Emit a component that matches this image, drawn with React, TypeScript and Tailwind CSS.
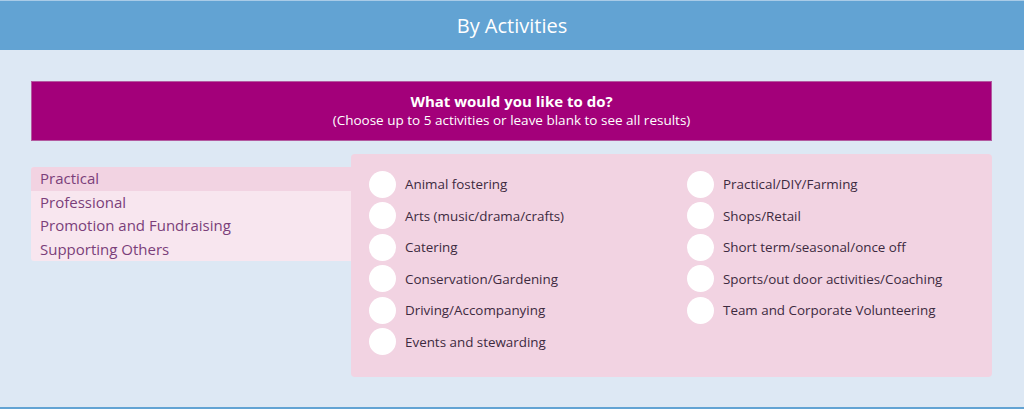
import React from "react";

const categories = [
  "Practical",
  "Professional",
  "Promotion and Fundraising",
  "Supporting Others"
];

const leftActivities = [
  "Animal fostering",
  "Arts (music/drama/crafts)",
  "Catering",
  "Conservation/Gardening",
  "Driving/Accompanying",
  "Events and stewarding"
];

const rightActivities = [
  "Practical/DIY/Farming",
  "Shops/Retail",
  "Short term/seasonal/once off",
  "Sports/out door activities/Coaching",
  "Team and Corporate Volunteering"
];

function ActivityColumn({ items }: { items: string[] }) {
  return (
    <div className="flex flex-col gap-[5px]">
      {items.map((item) => (
        <label key={item} className="flex h-[26.5px] cursor-pointer items-center gap-[9px]">
          <span className="h-[27px] w-[27px] shrink-0 rounded-full bg-white" />
          <span className="text-[13.4px] text-[#3d2a3f]">{item}</span>
        </label>
      ))}
    </div>
  );
}

export default function App() {
  return (
    <div className="flex h-[409px] w-full flex-col border-b-2 border-[#62a3d3] bg-[#dde8f4] font-['Open_Sans',sans-serif]">
      <div className="flex h-[50px] items-center justify-center border-t border-[#a9cbe7] bg-[#62a3d3]">
        <h1 className="text-[20px] text-white">By Activities</h1>
      </div>

      <div className="ml-[31px] mr-[32px] mt-[31px]">
        <div className="flex h-[60px] flex-col items-center justify-center border border-[#b35aa0] bg-[#a3007a] pb-[3px] text-white">
          <p className="text-[15px] font-bold leading-[20px]">What would you like to do?</p>
          <p className="text-[13.5px] leading-[18px]">
            (Choose up to 5 activities or leave blank to see all results)
          </p>
        </div>

        <div className="mt-[13px] flex items-start">
          <ul className="mt-[13px] w-[321px] shrink-0 overflow-hidden rounded-l-[3px] bg-[#f8e6ef]">
            {categories.map((c, i) => (
              <li
                key={c}
                className={`h-[23.5px] pl-[9px] text-[15px] leading-[23px] text-[#7b3f7a] ${
                  i === 0 ? "bg-[#f2d3e2]" : ""
                }`}>
                {c}
              </li>
            ))}
          </ul>

          <div className="-ml-px grid h-[223px] flex-1 grid-cols-[318px_1fr] rounded-[4px] bg-[#f2d3e2] pl-[18px] pt-[17px]">
            <ActivityColumn items={leftActivities} />
            <ActivityColumn items={rightActivities} />
          </div>
        </div>
      </div>
    </div>
  );
}
